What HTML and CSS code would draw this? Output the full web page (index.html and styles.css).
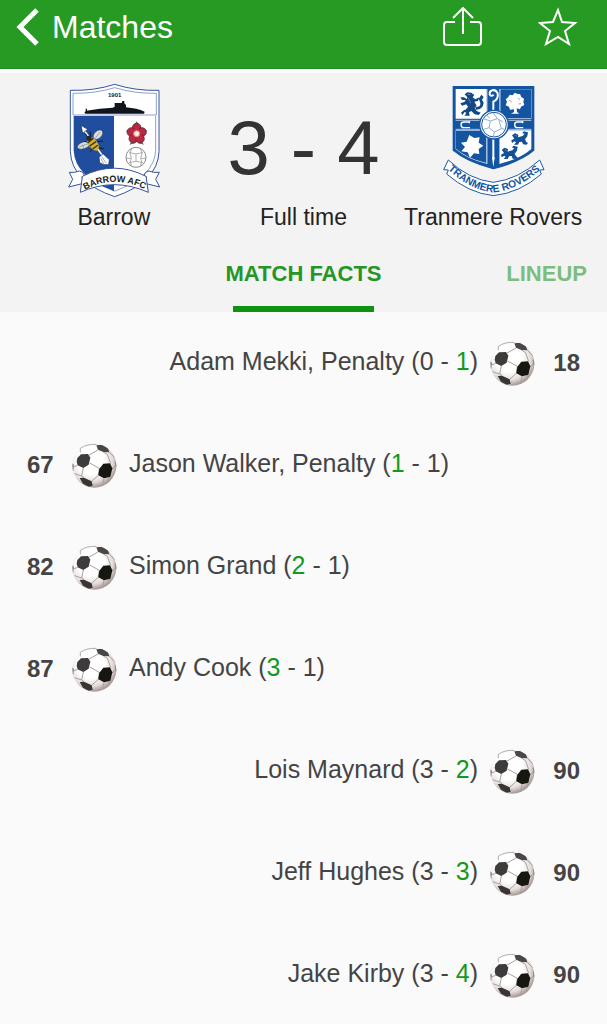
FILE: index.html
```html
<!DOCTYPE html>
<html lang="en">
<head>
    <meta charset="UTF-8">
    <meta name="viewport" content="width=device-width, initial-scale=1.0">
    <title>Barrow 3 - 4 Tranmere Rovers</title>
    <link rel="stylesheet" href="styles.css">
</head>
<body>
    <!-- shared football icon -->
    <svg class="sprite" aria-hidden="true">
        <defs>
            <radialGradient id="ballShade" cx="0.42" cy="0.38" r="0.62">
                <stop offset="0.5" stop-color="#ffffff"/>
                <stop offset="0.8" stop-color="#e4dcda"/>
                <stop offset="1" stop-color="#a89a96"/>
            </radialGradient>
            <clipPath id="ballClip"><circle cx="67" cy="68" r="66"/></clipPath>
        </defs>
        <symbol id="ball" viewBox="0 0 135 135">
            <circle cx="67" cy="68" r="66" fill="url(#ballShade)"/>
            <g clip-path="url(#ballClip)">
                <g fill="none" stroke="#a8a09e" stroke-width="3">
                    <path d="M50 37L78 21M53 60L82 76M34 75L29 99L36 104M82 76L79 97L59 115M96 106L92 124M113 100L106 128M94 27L106 34L116 61M112 28L128 44M121 76L134 68M29 99L8 92M17 67L4 72"/>
                </g>
                <path d="M73 7L90 5L108 16L112 28L94 27L78 20Z" fill="#4a4747"/>
                <path d="M16 45L27 34L48 33L55 44L50 65L34 75L17 67L14 56Z" fill="#3e3b3b"/>
                <path d="M94 62L114 61L121 76L115 101L96 106L79 97L82 77Z" fill="#171712"/>
                <path d="M23 105L36 104L59 115L62 128L50 131L33 122Z" fill="#383535"/>
                <path d="M0 60L6 65L4 82L0 86Z" fill="#8e8785"/>
                <path d="M128 54L135 60V78L130 70Z" fill="#938a88"/>
            </g>
            <path d="M25 28V16Q42 3 73 4" fill="none" stroke="#8f8a88" stroke-width="2"/>
        </symbol>
    </svg>

    <header class="topbar">
        <a class="back" href="#">
            <svg class="back-icon" viewBox="0 0 24 40" aria-hidden="true"><path d="M21 3L4 20L21 37" fill="none" stroke="#fff" stroke-width="5"/></svg>
            Matches
        </a>
        <div class="actions">
            <button type="button" class="icon-button" aria-label="Share">
                <svg viewBox="0 0 40 40" aria-hidden="true"><path d="M12 15H4Q1 15 1 18V35Q1 38 4 38H35Q38 38 38 35V18Q38 15 35 15H27M20 27V1M10 11L20 1L30 11" fill="none" stroke="#fff" stroke-width="2"/></svg>
            </button>
            <button type="button" class="icon-button" aria-label="Favourite">
                <svg viewBox="0 0 40 40" aria-hidden="true"><path d="M20 3L24 15L37 16L27 24L31 37L20 30L8 37L12 24L2 16L15 15Z" fill="none" stroke="#fff" stroke-width="2"/></svg>
            </button>
        </div>
    </header>

    <section class="scoreboard">
        <div class="teams">
            <div class="team">
                <svg class="crest" viewBox="-4 0 330 360" role="img" aria-label="Barrow AFC crest">
                    <path d="M30 31Q101 33 163 13Q225 33 296 31V215Q292 306 163 350Q34 306 30 215Z" fill="#fff" stroke="#37549b" stroke-width="3"/>
                    <path d="M40 108H161V334Q43 290 40 211Z" fill="#204d9d"/>
                    <path d="M286 108V211Q283 290 161 334M38 40Q104 41 163 23Q222 41 288 40V105H38Z" fill="none" stroke="#526eb0" stroke-width="2"/>
                    <text class="crest-year" x="163" y="51" text-anchor="middle">1901</text>
                    <path d="M72 97L78 92Q120 84 157 83L163 80V69H184L186 63H192V70L197 75V82Q230 85 253 95L251 101H75Z" fill="#10151b"/>
                    <path d="M78 86V94" stroke="#10151b" stroke-width="4"/>
                    <!-- bee on an arrow -->
                    <path d="M70 149L130 232" stroke="#f2f2f2" stroke-width="5"/>
                    <path d="M62 136L82 148L67 160Z" fill="#fff" stroke="#14264e" stroke-width="2"/>
                    <path d="M116 232L128 221L147 239L145 254H130L118 248Z" fill="#fff" stroke="#14264e" stroke-width="2"/>
                    <path d="M124 230L138 250M121 235L131 252" stroke="#697da6" stroke-width="2"/>
                    <ellipse cx="70" cy="196" rx="20" ry="10" transform="rotate(-20 70 196)" fill="#dadfdf" stroke="#394761" stroke-width="2"/>
                    <ellipse cx="113" cy="164" rx="17" ry="11" transform="rotate(-45 113 164)" fill="#dadfdf" stroke="#394761" stroke-width="2"/>
                    <path d="M56 201L84 191M102 177L120 156M66 193L70 204" stroke="#7b8790" stroke-width="2"/>
                    <path d="M83 172L74 160M91 168L89 155M84 187L72 184M109 185L128 183M99 199L90 215M112 203L130 206" fill="none" stroke="#111b29" stroke-width="3"/>
                    <ellipse cx="98" cy="191" rx="13" ry="24" transform="rotate(-36 98 191)" fill="#d8ae22"/>
                    <circle cx="86" cy="175" r="8" fill="#282a20"/>
                    <path d="M82 189L99 175M88 198L107 185M97 207L112 196" stroke="#30301c" stroke-width="4"/>
                    <!-- red rose -->
                    <path d="M229 124L238 138H220ZM197 152L213 148L207 164ZM261 152L245 148L251 164ZM207 194L216 180L226 189ZM251 194L242 180L232 189Z" fill="#4b8051"/>
                    <g fill="#b92843" stroke="#481d29" stroke-width="2">
                        <circle cx="229" cy="143" r="13"/><circle cx="213" cy="156" r="13"/><circle cx="245" cy="156" r="13"/><circle cx="219" cy="176" r="13"/><circle cx="239" cy="176" r="13"/>
                    </g>
                    <circle cx="229" cy="161" r="16" fill="#b92843"/>
                    <circle cx="229" cy="161" r="9" fill="#fff0c9" stroke="#e18294" stroke-width="3"/>
                    <!-- old leather ball -->
                    <circle cx="227" cy="232" r="30" fill="#fff" stroke="#888" stroke-width="3"/>
                    <path d="M206 218Q226 225 248 218M197 235H212M242 235H257M206 248Q227 240 248 248M213 207Q206 221 213 235Q205 246 214 257M241 207Q249 221 241 235Q249 246 240 257M227 222V244" fill="none" stroke="#888" stroke-width="2"/>
                    <!-- ribbon -->
                    <path d="M65 289L69 310L25 321L37 298L27 277Q42 279 58 273L67 277L72 286M258 289L254 310L298 321L286 298L297 277Q280 279 266 273L256 277L251 286" fill="#fff" stroke="#37549b" stroke-width="3"/>
                    <path d="M66 289Q161 240 257 289L264 337Q161 291 60 337Z" fill="#fff" stroke="#37549b" stroke-width="3"/>
                    <path id="barrowCurve" d="M74 329Q161 283 252 327" fill="none"/>
                    <text class="crest-name"><textPath href="#barrowCurve" startOffset="50%" text-anchor="middle">BARROW AFC</textPath></text>
                </svg>
                <span class="label">Barrow</span>
            </div>
            <div class="result">
                <span class="score">3 - 4</span>
                <span class="label">Full time</span>
            </div>
            <div class="team">
                <svg class="crest" viewBox="2 0 345 360" role="img" aria-label="Tranmere Rovers crest">
                    <path d="M54 20H295V211Q255 245 174 266Q94 245 54 211Z" fill="#1455a2"/>
                    <path d="M61 27H154V116H61ZM61 151H154V251Q94 237 61 207ZM194 27H288V116H194ZM194 151H288V207Q254 237 194 251Z" fill="#fff"/>
                    <path d="M195 28H287V115H195ZM62 152H153V249Q94 235 62 206Z" fill="#1455a2"/>
                    <path d="M61 121H288M61 148H288" stroke="#fff" stroke-width="2"/>
                    <path d="M155 27V252M193 27V252" stroke="#fff" stroke-width="2"/>
                    <!-- crozier -->
                    <path d="M174 105V62M174 65Q190 58 187 40Q182 28 171 31Q162 33 163 43Q167 51 175 44M174 174V238" fill="none" stroke="#fff" stroke-width="6"/>
                    <path d="M170 232H178L174 262Z" fill="#fff"/>
                    <path d="M104 126H86Q77 126 77 134Q77 143 86 143H104M264 126H246Q238 126 238 134Q238 143 246 143H264M102 123V130M262 123V130" fill="none" stroke="#fff" stroke-width="4"/>
                    <!-- ball -->
                    <circle cx="176" cy="134" r="43" fill="#fff" stroke="#1455a2" stroke-width="4"/>
                    <circle cx="176" cy="134" r="37" fill="#fff" stroke="#1455a2" stroke-width="3"/>
                    <path d="M144 116L165 123L186 116L203 126M165 123L161 143L177 156L198 146L191 121M161 143L143 149M177 156L174 170M186 116L174 99M198 146L211 148M154 106L163 114" fill="none" stroke="#8ab1d8" stroke-width="3"/>
                    <!-- rampant lion -->
                    <path d="M88 43L96 37L108 38L117 45L112 52L120 58L132 52L128 63L117 65L124 77L118 83L124 93L136 98L130 105L118 103L108 93L101 97L103 107H87L92 101L89 91L98 81L93 73L80 77L75 70L87 66L91 60L80 60L75 52L86 52L94 57L96 52Z" fill="#124985"/>
                    <path d="M120 81Q140 81 134 65L130 57L138 44L145 51L140 59L145 68Q143 88 122 89M100 96L88 96L81 105L77 98L87 89" fill="#124985"/>
                    <path d="M97 43L105 44M99 54L106 70" stroke="#7ea0c8" stroke-width="2"/>
                    <!-- tree -->
                    <path d="M236 88L224 89L221 80L211 76L215 65L211 58L219 51L223 44L232 46L238 38L247 42L254 42L258 51L266 56L264 66L267 75L257 80L254 88L244 85L245 96L252 101H227L236 96Z" fill="#fff"/>
                    <path d="M222 61L229 65M248 54L254 59M250 72L257 71" stroke="#7fa7d0" stroke-width="3"/>
                    <!-- star -->
                    <path d="M102 165L117 174L133 172L130 188L144 197L130 207L132 222L116 220L104 233L97 217L78 214L89 201L77 188L94 185Z" fill="#fff"/>
                    <!-- two small lions -->
                    <g id="lion" fill="#145093">
                        <path d="M230 166L239 160L249 164L248 172L262 168L268 161L261 160L265 154L278 157L276 169L269 178L273 186L278 189L274 194L263 193L260 185L252 186L248 194H236L242 187L238 184L230 189L228 181L237 176Z"/>
                        <path d="M240 166L245 168" stroke="#7fa2cc" stroke-width="2"/>
                    </g>
                    <use href="#lion" x="-31" y="43"/>
                    <path d="M54 20H295V211Q255 245 174 266Q94 245 54 211Z" fill="none" stroke="#1455a2" stroke-width="4"/>
                    <!-- ribbon -->
                    <path d="M39 240Q99 298 174 307Q249 298 313 240L326 269L313 270L318 282Q253 339 174 347Q99 339 34 282L39 270L25 269Z" fill="#fff" stroke="#1d5aa5" stroke-width="3"/>
                    <path id="tranmereCurve" d="M36 267Q105 331 174 337Q246 331 316 268" fill="none"/>
                    <text class="crest-scroll"><textPath href="#tranmereCurve" startOffset="50%" text-anchor="middle">TRANMERE ROVERS</textPath></text>
                </svg>
                <span class="label">Tranmere Rovers</span>
            </div>
        </div>
        <nav class="tabs">
            <button type="button" class="tab tab-active">MATCH FACTS</button>
            <button type="button" class="tab tab-next">LINEUP</button>
        </nav>
    </section>

    <main>
        <ul class="events">
            <li class="event away">
                <span class="minute">18</span>
                <svg class="ball" aria-hidden="true"><use href="#ball"/></svg>
                <span class="player">Adam Mekki, Penalty (0 - <span class="goal">1</span>)</span>
            </li>
            <li class="event">
                <span class="minute">67</span>
                <svg class="ball" aria-hidden="true"><use href="#ball"/></svg>
                <span class="player">Jason Walker, Penalty (<span class="goal">1</span> - 1)</span>
            </li>
            <li class="event">
                <span class="minute">82</span>
                <svg class="ball" aria-hidden="true"><use href="#ball"/></svg>
                <span class="player">Simon Grand (<span class="goal">2</span> - 1)</span>
            </li>
            <li class="event">
                <span class="minute">87</span>
                <svg class="ball" aria-hidden="true"><use href="#ball"/></svg>
                <span class="player">Andy Cook (<span class="goal">3</span> - 1)</span>
            </li>
            <li class="event away">
                <span class="minute">90</span>
                <svg class="ball" aria-hidden="true"><use href="#ball"/></svg>
                <span class="player">Lois Maynard (3 - <span class="goal">2</span>)</span>
            </li>
            <li class="event away">
                <span class="minute">90</span>
                <svg class="ball" aria-hidden="true"><use href="#ball"/></svg>
                <span class="player">Jeff Hughes (3 - <span class="goal">3</span>)</span>
            </li>
            <li class="event away">
                <span class="minute">90</span>
                <svg class="ball" aria-hidden="true"><use href="#ball"/></svg>
                <span class="player">Jake Kirby (3 - <span class="goal">4</span>)</span>
            </li>
        </ul>
    </main>
</body>
</html>
```

FILE: styles.css
```css
* {
    box-sizing: border-box;
}
body {
    margin: 0;
    font-family: "Liberation Sans", Arial, sans-serif;
    background-color: #fafafa;
    color: #444;
}
button {
    border: none;
    padding: 0;
    background: none;
    font-family: inherit;
    cursor: pointer;
}
.sprite {
    display: block;
    width: 0;
    height: 0;
}

/* green bar */
.topbar {
    display: flex;
    justify-content: space-between;
    align-items: center;
    padding: 7px 29px 21px 16px;
    background-color: #279a24;
    border-bottom: 1px solid #218a20;
}
.back {
    display: flex;
    align-items: center;
    gap: 12px;
    color: #fff;
    font-size: 32px;
    line-height: 40px;
    text-decoration: none;
}
.back-icon {
    width: 24px;
    height: 40px;
}
.actions {
    display: flex;
    gap: 55px;
}
.icon-button,
.icon-button svg {
    display: block;
    width: 40px;
    height: 40px;
}

/* teams and score */
.scoreboard {
    border-top: 4px solid #fdfdfd;
    background-color: #f3f3f3;
}
.teams {
    display: grid;
    grid-template-columns: 1fr 1fr 1fr;
    padding: 7px 19px 0;
}
.team,
.result {
    display: flex;
    flex-direction: column;
    align-items: center;
    white-space: nowrap;
}
.crest {
    height: 120px;
}
.score {
    color: #333;
    font-size: 76px;
    line-height: 120px;
    padding-top: 8px;
    height: 120px;
}
.label {
    color: #222;
    font-size: 23px;
    line-height: 34px;
}
.crest-year {
    font-size: 18px;
    font-weight: bold;
    fill: #222;
}
.crest-name {
    font-size: 27px;
    font-weight: bold;
    fill: #222;
}
.crest-scroll {
    font-size: 31px;
    font-weight: bold;
    fill: #1455a2;
}

/* tabs */
.tabs {
    display: grid;
    grid-template-columns: 1fr auto 1fr;
    padding: 24px 20px 0;
}
.tab {
    color: #259625;
    font-size: 22px;
    font-weight: bold;
    line-height: 32px;
}
.tab-active {
    grid-column: 2;
}
.tab-active::after {
    content: "";
    display: block;
    width: 90%;
    height: 6px;
    margin: 16px auto 0;
    background-color: #0b940f;
}
.tab-next {
    justify-self: end;
    align-self: start;
    color: #7dbd7d;
}

/* goals */
.events {
    margin: 0;
    padding: 0;
    list-style: none;
}
.event {
    display: flex;
    align-items: center;
    gap: 12px;
    height: 102px;
    padding: 0 27px;
}
.away {
    flex-direction: row-reverse;
}
.minute {
    width: 33px;
    font-size: 24px;
    font-weight: bold;
}
.away .minute {
    text-align: right;
}
.ball {
    width: 45px;
    height: 45px;
}
.player {
    padding-bottom: 3px;
    font-size: 25px;
}
.goal {
    color: #14991c;
}
```
